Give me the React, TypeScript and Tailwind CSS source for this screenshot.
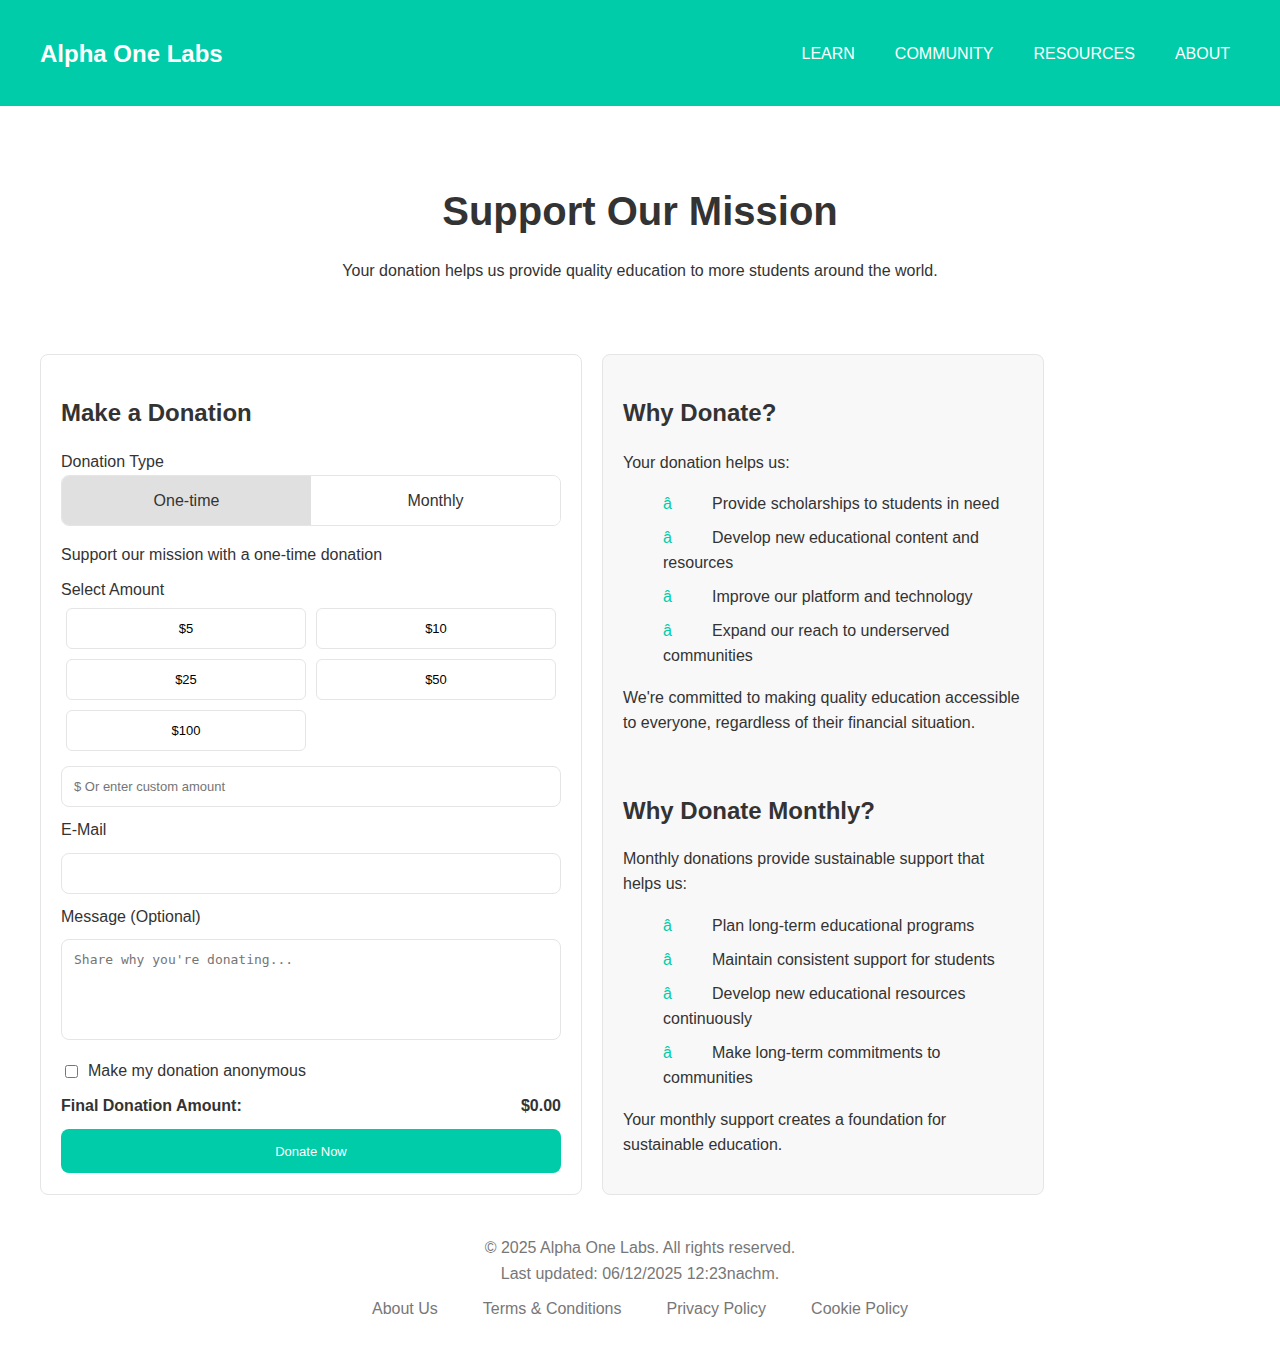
import React, { ReactElement } from 'react'

const amounts = ['$5', '$10', '$25', '$50', '$100']

const whyDonate = [
  'Provide scholarships to students in need',
  'Develop new educational content and resources',
  'Improve our platform and technology',
  'Expand our reach to underserved communities',
]

const whyMonthly = [
  'Plan long-term educational programs',
  'Maintain consistent support for students',
  'Develop new educational resources continuously',
  'Make long-term commitments to communities',
]

const BulletList: React.FC<{ items: string[] }> = ({ items }): ReactElement => (
  <ul className="pl-[40px] flex flex-col gap-[9px]">
    {items.map((item) => (
      <li key={item}>
        <span className="inline-block w-[49px] text-[#00cca9]">â</span>
        {item}
      </li>
    ))}
  </ul>
)

const App: React.FC = (): ReactElement => (
  <div className="min-h-[1353px] bg-white text-[#333] font-['Liberation_Sans',Arial,sans-serif] text-[16px] leading-[25px]">
    <header className="h-[106px] bg-[#00cca9] flex items-center justify-between pl-10 pr-[50px]">
      <span className="text-white font-bold text-[24px]">Alpha One Labs</span>
      <nav className="flex gap-10 text-white text-[16px]">
        <a>LEARN</a>
        <a>COMMUNITY</a>
        <a>RESOURCES</a>
        <a>ABOUT</a>
      </nav>
    </header>

    <section className="flex flex-col items-center pt-[81px]">
      <h1 className="text-[40px] leading-[48px] font-bold">Support Our Mission</h1>
      <p className="mt-[24px] leading-[24px]">
        Your donation helps us provide quality education to more students around the world.
      </p>
    </section>

    <main className="flex gap-5 px-10 mt-[71px]">
      <div className="w-[542px] border border-[#e5e5e5] rounded-lg px-5 pt-[44px] pb-5 flex flex-col">
        <h2 className="text-[24px] leading-[28px] font-bold">Make a Donation</h2>
        <label className="mt-[23px] leading-[24px]">Donation Type</label>
        <div className="mt-[1px] h-[51px] flex border border-[#e5e5e5] rounded-lg overflow-hidden">
          <button className="flex-1 bg-[#e0e0e0]">One-time</button>
          <button className="flex-1 bg-white">Monthly</button>
        </div>
        <p className="mt-[17px] leading-[24px]">Support our mission with a one-time donation</p>
        <label className="mt-[11px] leading-[24px]">Select Amount</label>
        <div className="mt-[6px] grid grid-cols-2 gap-[10px] px-[5px]">
          {amounts.map((a) => (
            <button
              key={a}
              className="h-[41px] border border-[#e5e5e5] rounded-md bg-white text-[13px] text-black"
            >
              {a}
            </button>
          ))}
        </div>
        <input
          className="mt-[15px] h-[41px] border border-[#e5e5e5] rounded-lg px-3 text-[13px] placeholder:text-[#757575]"
          placeholder="$ Or enter custom amount"
        />
        <label className="mt-[11px] leading-[24px]">E-Mail</label>
        <input className="mt-[11px] h-[41px] border border-[#e5e5e5] rounded-lg px-3 text-[13px]" />
        <label className="mt-[11px] leading-[24px]">Message (Optional)</label>
        <textarea
          className="mt-[10px] h-[101px] border border-[#e5e5e5] rounded-lg px-3 py-[11px] resize-none font-['DejaVu_Sans_Mono',monospace] text-[13px] leading-[17px] placeholder:text-[#757575]"
          placeholder="Share why you're donating..."
        />
        <label className="mt-[19px] flex items-center gap-[10px] leading-[24px] pl-1">
          <input type="checkbox" className="w-[13px] h-[13px]" />
          Make my donation anonymous
        </label>
        <div className="mt-[11px] flex justify-between font-bold leading-[24px]">
          <span>Final Donation Amount:</span>
          <span>$0.00</span>
        </div>
        <button className="mt-[11px] h-[44px] rounded-lg bg-[#00cca9] text-white text-[13px]">
          Donate Now
        </button>
      </div>

      <div className="w-[442px] border border-[#e5e5e5] rounded-lg bg-[#f8f8f8] px-5 pt-[44px] pb-[37px] flex flex-col">
        <h2 className="text-[24px] leading-[28px] font-bold">Why Donate?</h2>
        <p className="mt-[23px]">Your donation helps us:</p>
        <div className="mt-[16px]">
          <BulletList items={whyDonate} />
        </div>
        <p className="mt-[17px]">
          We're committed to making quality education accessible to everyone, regardless of their financial situation.
        </p>
        <h2 className="mt-[62px] text-[24px] leading-[28px] font-bold">Why Donate Monthly?</h2>
        <p className="mt-[21px]">Monthly donations provide sustainable support that helps us:</p>
        <div className="mt-[17px]">
          <BulletList items={whyMonthly} />
        </div>
        <p className="mt-[17px]">Your monthly support creates a foundation for sustainable education.</p>
      </div>
    </main>

    <footer className="mt-[40px] flex flex-col items-center text-[#777] leading-[26px]">
      <p>© 2025 Alpha One Labs. All rights reserved.</p>
      <p>Last updated: 06/12/2025 12:23nachm.</p>
      <div className="mt-[9px] flex gap-[45px]">
        <a>About Us</a>
        <a>Terms &amp; Conditions</a>
        <a>Privacy Policy</a>
        <a>Cookie Policy</a>
      </div>
    </footer>
  </div>
)

export default App
